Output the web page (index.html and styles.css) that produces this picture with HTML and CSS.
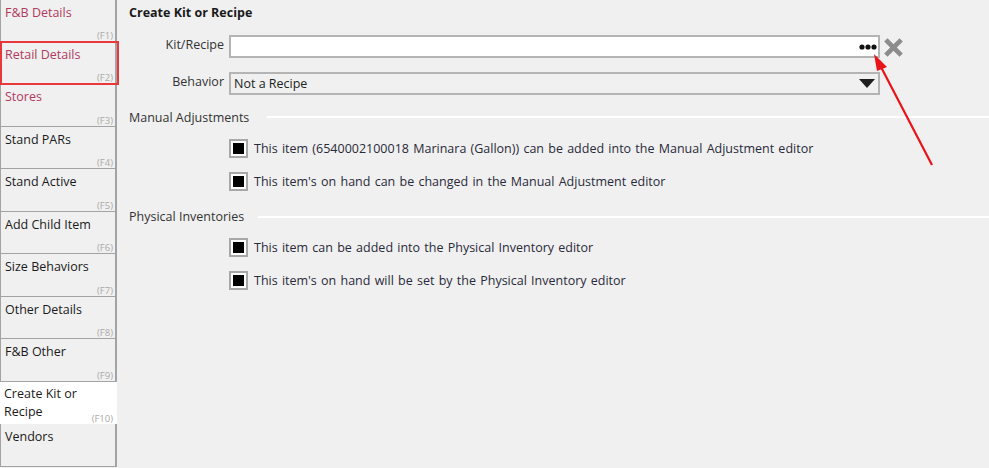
FILE: index.html
```html
<!DOCTYPE html>
<html lang="en">
<head>
    <meta charset="UTF-8">
    <title>Create Kit or Recipe</title>
    <link rel="stylesheet" href="styles.css">
</head>
<body>
    <div class="app">
        <div class="sidebar">
            <div class="tab first alert"><span class="label">F&amp;B Details</span><span class="key">(F1)</span></div>
            <div class="tab alert"><span class="label">Retail Details</span><span class="key">(F2)</span></div>
            <div class="tab alert"><span class="label">Stores</span><span class="key">(F3)</span></div>
            <div class="tab"><span class="label">Stand PARs</span><span class="key">(F4)</span></div>
            <div class="tab"><span class="label">Stand Active</span><span class="key">(F5)</span></div>
            <div class="tab"><span class="label">Add Child Item</span><span class="key">(F6)</span></div>
            <div class="tab"><span class="label">Size Behaviors</span><span class="key">(F7)</span></div>
            <div class="tab"><span class="label">Other Details</span><span class="key">(F8)</span></div>
            <div class="tab"><span class="label">F&amp;B Other</span><span class="key">(F9)</span></div>
            <div class="tab selected"><span class="label">Create Kit or Recipe</span><span class="key">(F10)</span></div>
            <div class="tab"><span class="label">Vendors</span><span class="key"></span></div>
            <div class="highlight"></div>
        </div>

        <div class="main">
            <h1>Create Kit or Recipe</h1>

            <div class="form-row">
                <label>Kit/Recipe</label>
                <div class="input">
                    <svg class="dots" width="18" height="6" viewBox="0 0 18 6">
                        <circle cx="3" cy="3" r="2.6" fill="#111"/>
                        <circle cx="9" cy="3" r="2.6" fill="#111"/>
                        <circle cx="15" cy="3" r="2.6" fill="#111"/>
                    </svg>
                </div>
                <svg class="clear" width="21" height="21" viewBox="0 0 22 22">
                    <path d="M3 3 L19 19 M19 3 L3 19" stroke="#8c8c8c" stroke-width="5"/>
                </svg>
            </div>
            <div class="form-row behavior">
                <label>Behavior</label>
                <div class="select">
                    <span>Not a Recipe</span>
                    <svg width="16" height="9" viewBox="0 0 16 9"><path d="M0 0 H16 L8 9 Z" fill="#1e1e1e"/></svg>
                </div>
            </div>

            <div class="section manual"><span>Manual Adjustments</span><div class="rule"></div></div>
            <div class="check-row"><span class="box"></span>This item (6540002100018 Marinara (Gallon)) can be added into the Manual Adjustment editor</div>
            <div class="check-row"><span class="box"></span>This item's on hand can be changed in the Manual Adjustment editor</div>

            <div class="section physical"><span>Physical Inventories</span><div class="rule"></div></div>
            <div class="check-row"><span class="box"></span>This item can be added into the Physical Inventory editor</div>
            <div class="check-row"><span class="box"></span>This item's on hand will be set by the Physical Inventory editor</div>
        </div>

        <svg class="arrow" width="989" height="468" viewBox="0 0 989 468">
            <line x1="932" y1="165" x2="881" y2="67" stroke="#e8141a" stroke-width="2.2"/>
            <path d="M874 54 L887 67 L877 71 Z" fill="#e8141a"/>
        </svg>
    </div>
</body>
</html>
```

FILE: styles.css
```css
body {
    margin: 0;
    background: #f0f0f0;
    font-family: "Open Sans", "Noto Sans", Arial, sans-serif;
    font-size: 12px;
    color: #1a1a1a;
}
.app {
    position: relative;
    display: flex;
    width: 989px;
    height: 468px;
    overflow: hidden;
}

/* left tabs */
.sidebar {
    position: relative;
    width: 117px;
    flex-shrink: 0;
    margin-top: -1px;
}
.tab {
    box-sizing: border-box;
    height: 42.5px;
    border: 1px solid #a3a3a3;
    border-top: none;
    border-right-width: 2px;
    display: flex;
    flex-direction: column;
    justify-content: space-between;
    padding: 4px 4px 0 4px;
    background: #f0f0f0;
}
.tab.first {
    border-top: 1px solid #a3a3a3;
}
.tab .label {
    font-size: 12.5px;
    line-height: 18px;
    color: #1a1a1a;
}
.tab.alert .label {
    color: #b03a5e;
}
.tab .key {
    align-self: flex-end;
    font-size: 9.5px;
    line-height: 11px;
    color: #aaaaaa;
    margin-right: -2px;
}
.tab.selected {
    background: #fff;
    border: none;
    padding-left: 4px;
    padding-top: 3px;
}
.tab.selected .key {
    margin-top: -14px;
    margin-right: 0;
}
.highlight {
    position: absolute;
    left: 0;
    top: 42px;
    width: 119px;
    height: 44px;
    box-sizing: border-box;
    border: 2px solid #e8383c;
}

/* main panel */
.main {
    flex: 1;
    padding-left: 12px;
}
h1 {
    margin: 4px 0 0 0;
    font-size: 12.5px;
    line-height: 18px;
    font-weight: bold;
}
.form-row {
    display: flex;
    align-items: center;
    height: 23px;
    margin-top: 13px;
}
.form-row.behavior {
    margin-top: 14px;
}
.form-row label {
    width: 95px;
    text-align: right;
    padding-right: 5px;
    font-size: 12.5px;
    color: #333;
    margin-top: -4px;
}
.input, .select {
    box-sizing: border-box;
    width: 651px;
    height: 23px;
    border: 2px solid #b4b4b4;
    display: flex;
    align-items: center;
    justify-content: space-between;
}
.input {
    background: #fff;
    justify-content: flex-end;
}
.dots {
    margin-right: 1px;
}
.clear {
    margin-left: 3px;
    margin-top: 2px;
}
.select {
    background: #f0f0f0;
    padding: 0 3px 0 3px;
    font-size: 12.5px;
    color: #222;
}

.section {
    display: flex;
    align-items: center;
    margin-top: 12px;
    font-size: 12.5px;
    color: #333;
    height: 20px;
}
.section.physical {
    margin-top: 15.5px;
}
.section .rule {
    flex: 1;
    height: 2px;
    background: #fff;
    margin-left: 18px;
}
.section.physical .rule {
    margin-left: 14px;
}
.section + .check-row {
    margin-top: 11px;
}
.check-row {
    display: flex;
    align-items: center;
    margin-left: 100px;
    margin-top: 13px;
    height: 20px;
    font-size: 12.5px;
    color: #2a2a3a;
    word-spacing: 1px;
}
.box {
    box-sizing: border-box;
    width: 19px;
    height: 19px;
    border: 2px solid #a8a8a8;
    padding: 2px;
    background: #fff;
    margin-right: 6px;
}
.box::after {
    content: "";
    display: block;
    width: 11px;
    height: 11px;
    background: #000;
}

.arrow {
    position: absolute;
    left: 0;
    top: 0;
    pointer-events: none;
}
```
